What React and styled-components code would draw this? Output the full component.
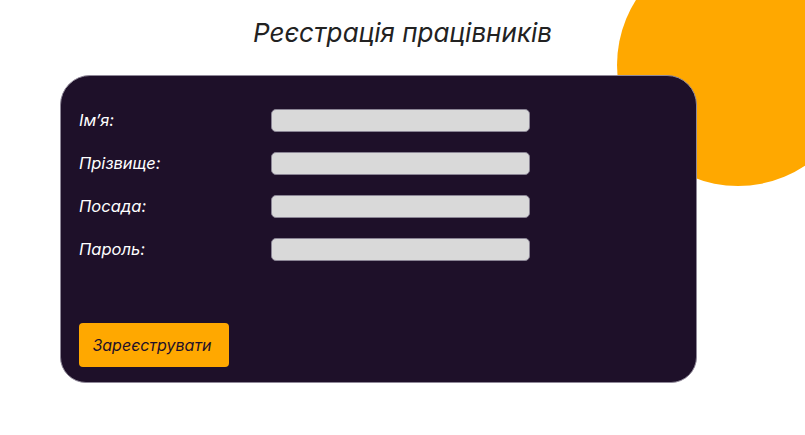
import React from "react";
import styled, { createGlobalStyle } from "styled-components";

const Global = createGlobalStyle`
  html, body { margin: 0; padding: 0; background: #ffffff; }
  body { font-family: Inter, "Noto Sans", sans-serif; overflow: hidden; }
`;

const Page = styled.div`
  position: relative;
  width: 805px;
  height: 435px;
  overflow: hidden;
  display: flex;
  flex-direction: column;
`;

const Circle = styled.div`
  position: absolute;
  left: 617px;
  top: -56px;
  width: 242px;
  height: 242px;
  border-radius: 50%;
  background: #ffa800;
  z-index: 0;
`;

const Title = styled.h1`
  position: relative;
  z-index: 1;
  margin: 17px 0 0 0;
  text-align: center;
  font-size: 26px;
  line-height: 32px;
  font-weight: 400;
  font-style: italic;
  color: #222222;
`;

const Card = styled.form`
  position: relative;
  z-index: 1;
  box-sizing: border-box;
  margin: 26px 0 0 60px;
  width: 637px;
  height: 308px;
  border: 1px solid #8f8898;
  border-radius: 30px 30px 26px 26px;
  background: #1e1029;
  padding: 33px 17px 15px 18px;
  display: flex;
  flex-direction: column;
`;

const Fields = styled.div`
  display: grid;
  grid-template-columns: 192px 259px;
  grid-auto-rows: 23px;
  row-gap: 20px;
  align-items: center;
`;

const Label = styled.label`
  font-size: 16.5px;
  font-style: italic;
  color: #ffffff;
  line-height: 23px;
`;

const Input = styled.input`
  box-sizing: border-box;
  width: 259px;
  height: 23px;
  border: 1px solid #8a8494;
  border-radius: 5px;
  background: #d9d9d9;
  outline: none;
  padding: 0 8px;
`;

const Button = styled.button`
  margin-top: 62px;
  width: 150px;
  height: 44px;
  border: none;
  border-radius: 4px;
  background: #ffa800;
  color: #1e1029;
  font-family: Inter, "Noto Sans", sans-serif;
  font-size: 16px;
  font-style: italic;
  cursor: pointer;
  padding: 0 4px 0 0;
`;

const fields = ["Ім’я:", "Прізвище:", "Посада:", "Пароль:"];

export default function App() {
  return (
    <Page>
      <Global />
      <Circle />
      <Title>Реєстрація працівників</Title>
      <Card onSubmit={(e) => e.preventDefault()}>
        <Fields>
          {fields.map((f) => (
            <React.Fragment key={f}>
              <Label>{f}</Label>
              <Input type={f === "Пароль:" ? "password" : "text"} />
            </React.Fragment>
          ))}
        </Fields>
        <Button type="button">Зареєструвати</Button>
      </Card>
    </Page>
  );
}
